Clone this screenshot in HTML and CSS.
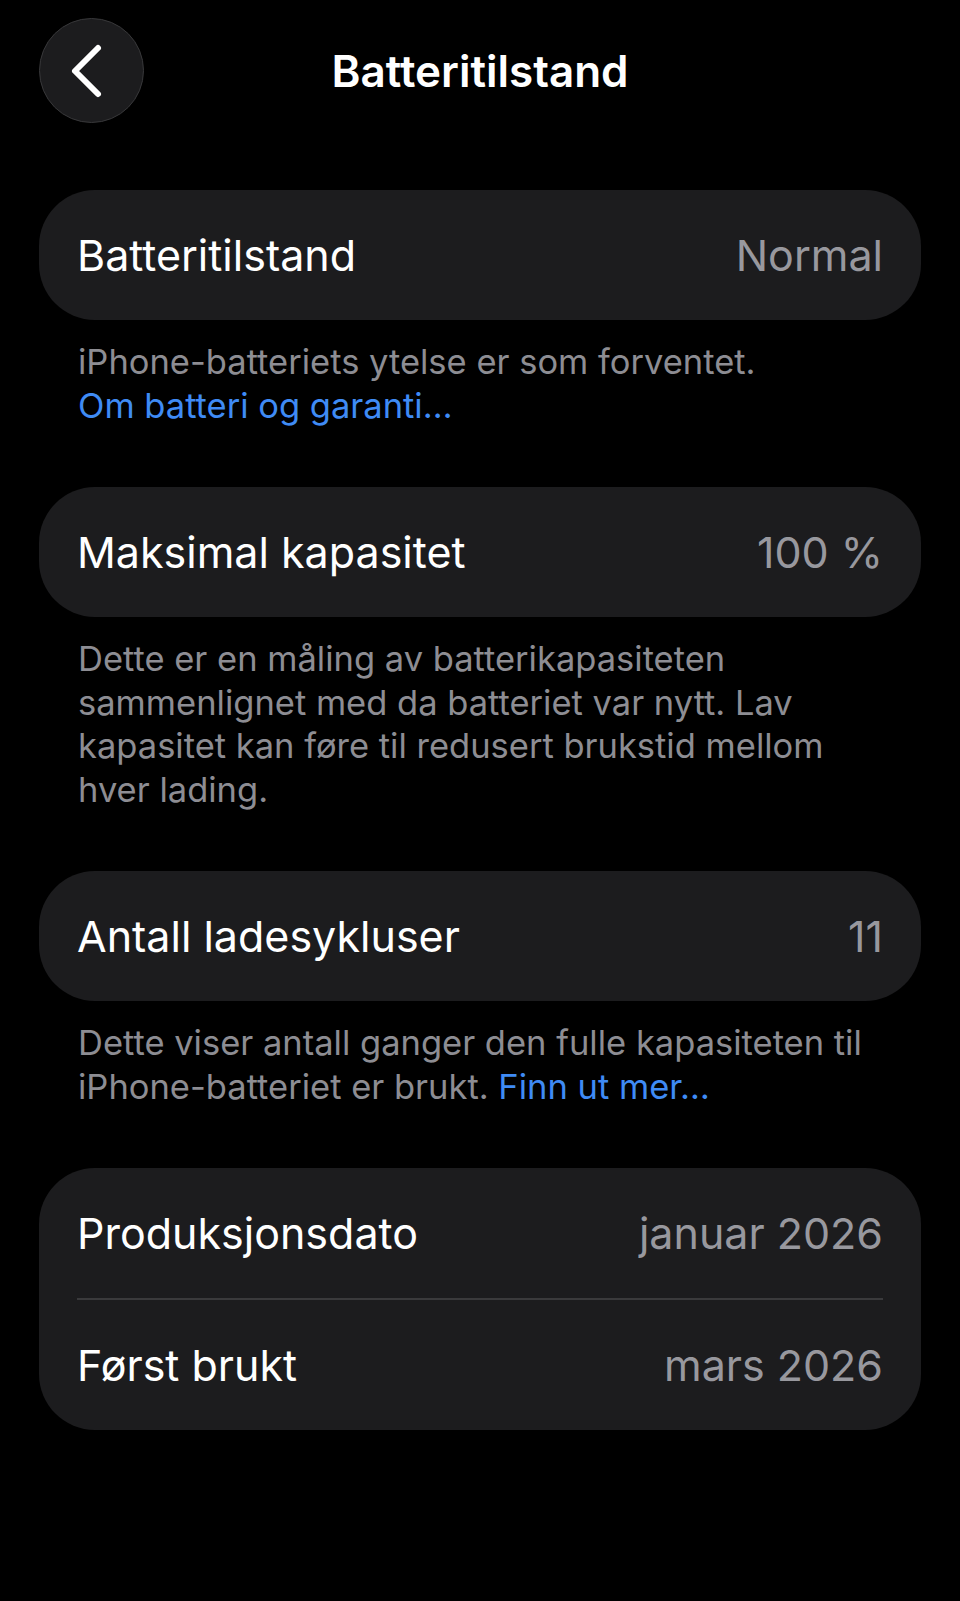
FILE: index.html
```html
<!DOCTYPE html>
<html lang="no">
<head>
  <meta charset="UTF-8" />
  <meta name="viewport" content="width=device-width, initial-scale=1.0"/>
  <title>Batteritilstand</title>
  <link rel="stylesheet" href="styles.css">
</head>
<body>
  <div class="screen">
    <div class="header">
      <button class="back" aria-label="Tilbake">
        <svg width="40" height="56" viewBox="0 0 40 56">
          <polyline points="29,5 6,28 29,51" fill="none" stroke="#fff" stroke-width="6" stroke-linecap="round" stroke-linejoin="round"/>
        </svg>
      </button>
      <h1 class="title">Batteritilstand</h1>
    </div>

    <div class="card">
      <div class="row">
        <span class="label">Batteritilstand</span>
        <span class="value">Normal</span>
      </div>
    </div>
    <p class="note">iPhone-batteriets ytelse er som forventet.<br><a href="#">Om batteri og garanti…</a></p>

    <div class="card">
      <div class="row">
        <span class="label">Maksimal kapasitet</span>
        <span class="value">100 %</span>
      </div>
    </div>
    <p class="note">Dette er en måling av batterikapasiteten sammenlignet med da batteriet var nytt. Lav kapasitet kan føre til redusert brukstid mellom hver lading.</p>

    <div class="card">
      <div class="row">
        <span class="label">Antall ladesykluser</span>
        <span class="value">11</span>
      </div>
    </div>
    <p class="note">Dette viser antall ganger den fulle kapasiteten til iPhone-batteriet er brukt. <a href="#">Finn ut mer…</a></p>

    <div class="card">
      <div class="row">
        <span class="label">Produksjonsdato</span>
        <span class="value">januar 2026</span>
      </div>
      <div class="divider"></div>
      <div class="row">
        <span class="label">Først brukt</span>
        <span class="value">mars 2026</span>
      </div>
    </div>
  </div>
</body>
</html>
```

FILE: styles.css
```css
body {
  margin: 0;
  background: #000;
  color: #fff;
  font-family: Inter, "Noto Sans", sans-serif;
}
.screen {
  padding: 0 39px 160px;
}
.header {
  position: relative;
  height: 142px;
  display: flex;
  align-items: center;
  justify-content: center;
}
.back {
  position: absolute;
  left: 0;
  top: 18px;
  width: 105px;
  height: 105px;
  border-radius: 50%;
  background: #1c1c1e;
  border: 1.5px solid #38383a;
  display: flex;
  align-items: center;
  justify-content: center;
  padding: 0 6px 0 0;
}
.title {
  margin: 0;
  font-size: 44px;
  font-weight: 600;
}
.card {
  margin-top: 48px;
  background: #1c1c1e;
  border-radius: 56px;
  padding: 0 38px;
}
.row {
  height: 130px;
  display: flex;
  align-items: center;
  justify-content: space-between;
  font-size: 43px;
}
.value {
  color: #98989e;
}
.divider {
  height: 1.5px;
  background: #3a3a3c;
}
.note {
  margin: 20px 0 0;
  padding: 0 39px;
  font-size: 34.5px;
  line-height: 43.5px;
  color: #8d8d93;
}
.note + .card {
  margin-top: 60px;
}
.note a {
  color: #3f8bf5;
  text-decoration: none;
}
```
